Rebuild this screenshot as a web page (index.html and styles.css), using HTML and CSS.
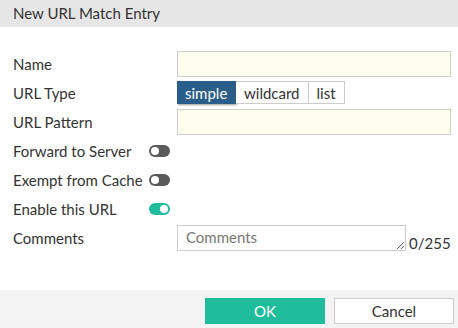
FILE: index.html
```html
<!DOCTYPE html>
<html lang="en">
<head>
    <meta charset="UTF-8">
    <title>New URL Match Entry</title>
    <link rel="stylesheet" href="styles.css">
</head>
<body>
    <div class="dialog">
        <header class="dialog-header">New URL Match Entry</header>
        <div class="dialog-body">
            <div class="row">
                <label class="label">Name</label>
                <input class="text-input" type="text">
            </div>
            <div class="row">
                <label class="label">URL Type</label>
                <div class="btn-group">
                    <button class="seg active">simple</button>
                    <button class="seg">wildcard</button>
                    <button class="seg">list</button>
                </div>
            </div>
            <div class="row">
                <label class="label">URL Pattern</label>
                <input class="text-input" type="text">
            </div>
            <div class="row">
                <label class="label">Forward to Server</label>
                <span class="toggle"></span>
            </div>
            <div class="row">
                <label class="label">Exempt from Cache</label>
                <span class="toggle"></span>
            </div>
            <div class="row">
                <label class="label">Enable this URL</label>
                <span class="toggle on"></span>
            </div>
            <div class="row">
                <label class="label">Comments</label>
                <textarea class="comments" placeholder="Comments"></textarea>
                <span class="counter">0/255</span>
            </div>
        </div>
        <footer class="dialog-footer">
            <button class="btn btn-ok">OK</button>
            <button class="btn btn-cancel">Cancel</button>
        </footer>
    </div>
</body>
</html>
```

FILE: styles.css
```css
* {
    margin: 0;
    padding: 0;
    box-sizing: border-box;
    font-family: Lato, "Open Sans", sans-serif;
}

body {
    background: #fff;
    color: #333;
    font-size: 15px;
}

.dialog {
    width: 458px;
    height: 328px;
    display: flex;
    flex-direction: column;
}

.dialog-header {
    height: 27px;
    background: #e6e6e6;
    padding-left: 13px;
    font-size: 15px;
    line-height: 27px;
    color: #333;
}

.dialog-body {
    flex: 1;
    padding: 22px 4px 0 13px;
}

.row {
    display: flex;
    align-items: center;
    height: 29px;
}

.label {
    width: 164px;
    flex-shrink: 0;
}

.text-input {
    width: 274px;
    height: 26px;
    border: 1px solid #ccc;
    background: #fefeee;
    outline: none;
}

.btn-group {
    display: flex;
    height: 23px;
}

.seg {
    border: 1px solid #ccc;
    border-left: none;
    background: #fff;
    color: #333;
    font-size: 15px;
    padding: 0 8px;
    height: 23px;
    cursor: pointer;
}

.seg.active {
    background: #2a5e8a;
    color: #fff;
    border-color: #2a5e8a;
    box-shadow: 1px 1px 2px rgba(0,0,0,0.4);
    width: 59px;
}

.toggle {
    position: relative;
    display: inline-block;
    width: 21px;
    height: 12px;
    border-radius: 6px;
    background: #5a5a5a;
    margin-left: -28px;
}

.toggle::after {
    content: "";
    position: absolute;
    top: 2px;
    left: 2px;
    width: 8px;
    height: 8px;
    border-radius: 50%;
    background: #fff;
}

.toggle.on {
    background: #20bd9c;
}

.toggle.on::after {
    left: 11px;
}

.comments {
    width: 229px;
    height: 26px;
    border: 1px solid #ccc;
    background: #fff;
    padding: 2px 8px;
    font-size: 15px;
    color: #333;
    resize: both;
    outline: none;
}

.comments::placeholder {
    color: #777;
}

.counter {
    align-self: flex-end;
    margin-left: 3px;
    font-size: 15px;
    line-height: 16px;
    margin-bottom: 1px;
}

.dialog-footer {
    height: 38px;
    background: #f3f3f3;
    display: flex;
    justify-content: flex-end;
    align-items: flex-start;
    gap: 9px;
    padding: 8px 4px 0 0;
}

.btn {
    width: 120px;
    height: 26px;
    font-size: 15px;
    cursor: pointer;
}

.btn-ok {
    background: #20bd9c;
    color: #fff;
    border: none;
}

.btn-cancel {
    background: #fff;
    color: #333;
    border: 1px solid #ccc;
}
```
